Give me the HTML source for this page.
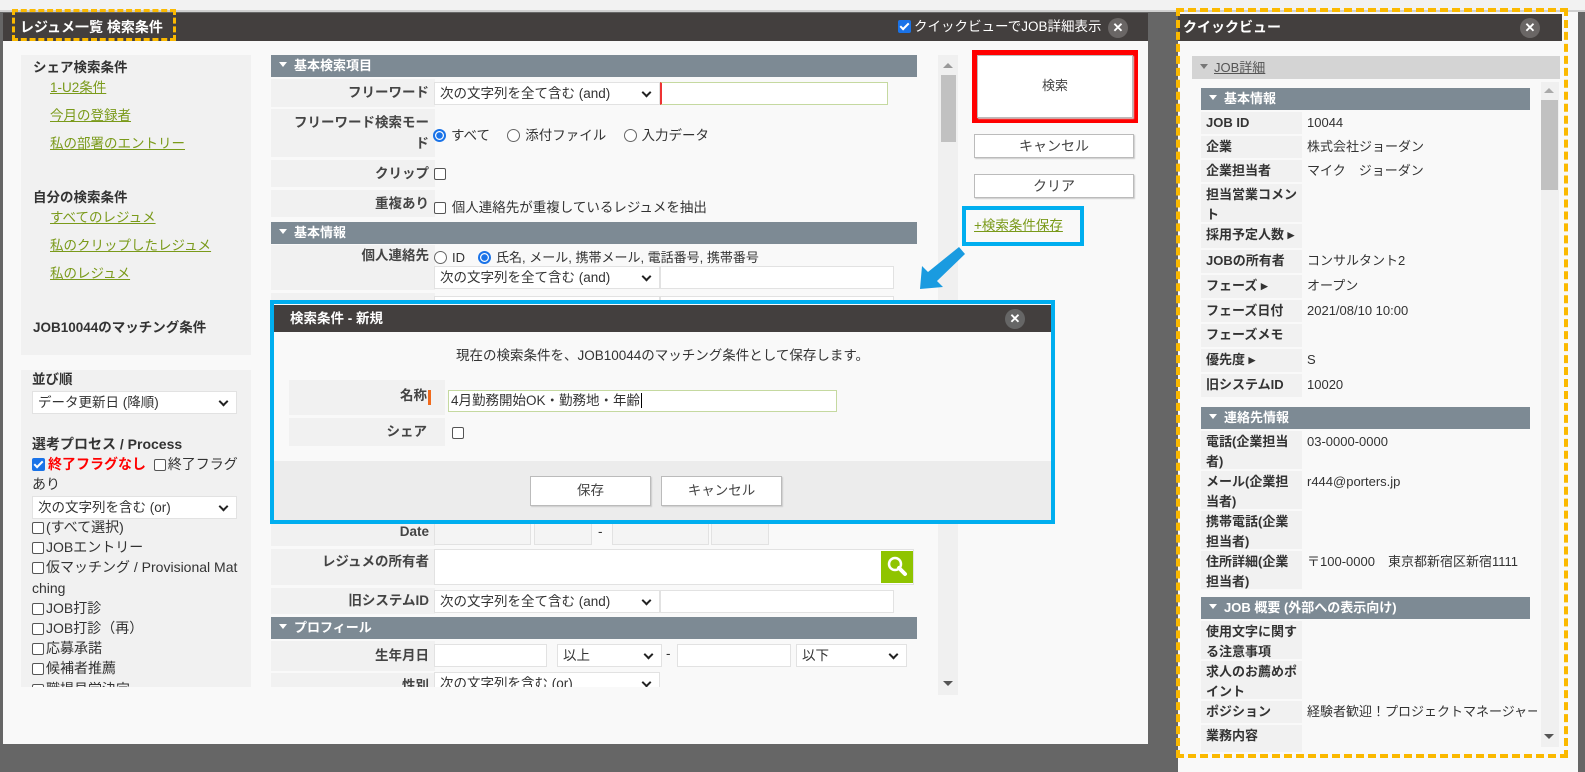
<!DOCTYPE html>
<html><head><meta charset="utf-8">
<style>
*{box-sizing:border-box;margin:0;padding:0}
body{width:1585px;height:772px;overflow:hidden;position:relative;background:#666;font-family:"Liberation Sans","Noto Sans CJK JP",sans-serif;font-size:13px;color:#333}
.a{position:absolute}
.hdr{background:#433f3e;color:#fff;font-weight:bold}
.cls{position:absolute;width:20px;height:20px;border-radius:50%;background:#6a6665;color:#fff;font-size:13px;line-height:20px;text-align:center;font-weight:bold}
.sec{position:absolute;background:#7d8a94;color:#fff;font-weight:bold;font-size:13px;line-height:22px;padding-left:8px}
.sec:before{content:"";display:inline-block;border:4px solid transparent;border-top:5px solid #fff;margin-right:7px;vertical-align:-1px}
.lab{position:absolute;background:#f1f1f1;text-align:right;padding-right:6px;font-weight:bold;color:#444}
.inp{position:absolute;background:#fff;border:1px solid #e2e2e2}
.sel{position:absolute;background:#fff;border:1px solid #e2e2e2;padding-left:5px;line-height:21px;color:#333}
.sel:after{content:"";position:absolute;right:9px;top:6px;width:5px;height:5px;border-right:2px solid #222;border-bottom:2px solid #222;transform:rotate(45deg)}
.cb{display:inline-block;width:12px;height:12px;border:1px solid #555;border-radius:2px;vertical-align:-2px;margin-right:2px;background:#fff}
.cbk{display:inline-block;width:13px;height:13px;border-radius:2px;background:#1a73e8;vertical-align:-2px;margin-right:3px;position:relative}
.cbk:after{content:"";position:absolute;left:4px;top:1px;width:3px;height:7px;border-right:2px solid #fff;border-bottom:2px solid #fff;transform:rotate(45deg)}
.rd{display:inline-block;width:13px;height:13px;border:1px solid #666;border-radius:50%;vertical-align:-2px;margin-right:5px;background:#fff}
.rdk{display:inline-block;width:13px;height:13px;border:2px solid #1a73e8;border-radius:50%;vertical-align:-2px;margin-right:5px;background:radial-gradient(#1a73e8 3px,#fff 3.5px)}
.lk{color:#7a9a1a;text-decoration:underline}
.btn{position:absolute;background:#fff;border:1px solid #bbb;box-shadow:1px 1px 1px #ccc;text-align:center;color:#444}
.q{position:absolute;left:1201px;width:329px;border-top:2px solid #f9f9f9}
.q .l{position:absolute;left:0;top:0;bottom:0;width:101px;background:#f1f1f1;font-weight:bold;padding:1px 5px;line-height:20px;font-size:13px}
.q .v{position:absolute;left:101px;right:0;top:0;bottom:0;background:#f9f9f9;padding:1px 5px;line-height:20px;font-size:13px;white-space:nowrap}
</style></head><body>
<div class="a" style="left:0;top:0;width:1585px;height:12px;background:#f2f2f2;border-bottom:2px solid #d0d0d0"></div>

<!-- main dialog -->
<div class="a" style="left:3px;top:13px;width:1145px;height:731px;background:#f9f9f9"></div>
<div class="a hdr" style="left:3px;top:13px;width:1145px;height:28px;font-size:14px;line-height:28px;padding-left:17px">レジュメ一覧 検索条件</div>
<div class="a" style="left:12px;top:9px;width:164px;height:32px;border:3px dashed #fbb900"></div>
<div class="a" style="left:898px;top:13px;line-height:28px;color:#fff;font-size:13.5px"><span class="cbk"></span>クイックビューでJOB詳細表示</div>
<div class="cls" style="left:1108px;top:18px">✕</div>

<!-- left panel -->
<div class="a" style="left:21px;top:55px;width:230px;height:300px;background:#f1f1f1;line-height:20px;font-size:13.5px">
 <div class="a" style="left:12px;top:3px;font-weight:bold">シェア検索条件</div>
 <div class="a lk" style="left:29px;top:23px">1-U2条件</div>
 <div class="a lk" style="left:29px;top:51px">今月の登録者</div>
 <div class="a lk" style="left:29px;top:79px">私の部署のエントリー</div>
 <div class="a" style="left:12px;top:133px;font-weight:bold">自分の検索条件</div>
 <div class="a lk" style="left:29px;top:153px">すべてのレジュメ</div>
 <div class="a lk" style="left:29px;top:181px">私のクリップしたレジュメ</div>
 <div class="a lk" style="left:29px;top:209px">私のレジュメ</div>
 <div class="a" style="left:12px;top:263px;font-weight:bold">JOB10044のマッチング条件</div>
</div>
<div class="a" style="left:21px;top:370px;width:230px;height:317px;background:#f1f1f1;overflow:hidden;line-height:20px;font-size:14px">
 <div class="a" style="left:11px;top:0px;font-weight:bold;font-size:13.5px">並び順</div>
 <div class="sel" style="left:11px;top:21px;width:205px;height:23px;font-size:13.5px">データ更新日 (降順)</div>
 <div class="a" style="left:11px;top:64px;font-weight:bold">選考プロセス / Process</div>
 <div class="a" style="left:11px;top:84px;width:206px"><span class="cbk"></span><b style="color:#f00">終了フラグなし</b>&nbsp; <span class="cb"></span>終了フラグあり</div>
 <div class="sel" style="left:11px;top:126px;width:205px;height:23px;font-size:13.5px">次の文字列を含む (or)</div>
 <div class="a" style="left:11px;top:147px;width:207px;line-height:20.2px;word-break:break-all">
 <span class="cb"></span>(すべて選択)<br><span class="cb"></span>JOBエントリー<br><span class="cb"></span>仮マッチング / Provisional Matching<br><span class="cb"></span>JOB打診<br><span class="cb"></span>JOB打診（再）<br><span class="cb"></span>応募承諾<br><span class="cb"></span>候補者推薦<br><span class="cb"></span>職場見学決定</div>
</div>

<!-- form area -->
<div class="a" style="left:268px;top:55px;width:652px;height:632px;overflow:hidden;font-size:13.5px">
 <div style="position:absolute;left:-268px;top:-55px;width:1000px;height:800px">
 <div class="sec" style="left:271px;top:55px;width:646px;height:22px">基本検索項目</div>
 <div class="lab" style="left:271px;top:79px;width:164px;height:28px;line-height:28px">フリーワード</div>
 <div class="sel" style="left:434px;top:82px;width:226px;height:23px">次の文字列を全て含む (and)</div>
 <div class="inp" style="left:660px;top:82px;width:228px;height:23px;border-color:#c5d9a0;border-left:2px solid #e33"></div>
 <div class="lab" style="left:271px;top:109px;width:164px;height:48px;line-height:21px;padding-top:3px">フリーワード検索モー<br>ド</div>
 <div class="a" style="left:433px;top:124px"><span class="rdk"></span>すべて　 <span class="rd"></span>添付ファイル　 <span class="rd"></span>入力データ</div>
 <div class="lab" style="left:271px;top:160px;width:164px;height:27px;line-height:27px">クリップ</div>
 <div class="a" style="left:434px;top:166px"><span class="cb"></span></div>
 <div class="lab" style="left:271px;top:190px;width:164px;height:27px;line-height:27px">重複あり</div>
 <div class="a" style="left:434px;top:196px"><span class="cb"></span> 個人連絡先が重複しているレジュメを抽出</div>
 <div class="sec" style="left:271px;top:222px;width:646px;height:22px">基本情報</div>
 <div class="lab" style="left:271px;top:245px;width:164px;height:45px;line-height:22px">個人連絡先</div>
 <div class="a" style="left:434px;top:247px;font-size:13px"><span class="rd"></span>ID　<span class="rdk"></span>氏名, メール, 携帯メール, 電話番号, 携帯番号</div>
 <div class="sel" style="left:434px;top:266px;width:226px;height:23px">次の文字列を全て含む (and)</div>
 <div class="inp" style="left:660px;top:266px;width:234px;height:23px"></div>
 <div class="lab" style="left:271px;top:293px;width:164px;height:40px"></div>
 <div class="inp" style="left:434px;top:296px;width:226px;height:23px"></div>
 <div class="inp" style="left:660px;top:296px;width:234px;height:23px"></div>
 <div class="lab" style="left:271px;top:520px;width:164px;height:26px;line-height:24px">Date</div>
 <div class="inp" style="left:434px;top:522px;width:97px;height:23px;background:#f4f4f4"></div>
 <div class="inp" style="left:534px;top:522px;width:58px;height:23px;background:#f4f4f4"></div>
 <div class="a" style="left:598px;top:524px">-</div>
 <div class="inp" style="left:612px;top:522px;width:97px;height:23px;background:#f4f4f4"></div>
 <div class="inp" style="left:711px;top:522px;width:58px;height:23px;background:#f4f4f4"></div>
 <div class="lab" style="left:271px;top:549px;width:164px;height:36px;line-height:26px">レジュメの所有者</div>
 <div class="inp" style="left:434px;top:549px;width:480px;height:36px"></div>
 <div class="a" style="left:881px;top:551px;width:32px;height:32px;background:#8fc400">
  <svg width="32" height="32" viewBox="0 0 32 32"><circle cx="14" cy="13" r="6" fill="none" stroke="#fff" stroke-width="2.5"/><path d="M18 17l6 6" stroke="#fff" stroke-width="4" stroke-linecap="round"/></svg></div>
 <div class="lab" style="left:271px;top:588px;width:164px;height:26px;line-height:26px">旧システムID</div>
 <div class="sel" style="left:434px;top:590px;width:226px;height:23px">次の文字列を全て含む (and)</div>
 <div class="inp" style="left:660px;top:590px;width:234px;height:23px"></div>
 <div class="sec" style="left:271px;top:617px;width:646px;height:22px">プロフィール</div>
 <div class="lab" style="left:271px;top:641px;width:164px;height:30px;line-height:30px">生年月日</div>
 <div class="inp" style="left:434px;top:644px;width:113px;height:23px"></div>
 <div class="sel" style="left:557px;top:644px;width:105px;height:23px">以上</div>
 <div class="a" style="left:666px;top:646px">-</div>
 <div class="inp" style="left:677px;top:644px;width:114px;height:23px"></div>
 <div class="sel" style="left:796px;top:644px;width:111px;height:23px">以下</div>
 <div class="lab" style="left:271px;top:673px;width:164px;height:30px;line-height:26px">性別</div>
 <div class="sel" style="left:434px;top:672px;width:226px;height:23px">次の文字列を含む (or)</div>
 </div>
</div>
<!-- scrollbar -->
<div class="a" style="left:938px;top:55px;width:20px;height:640px;background:#f0f0f0"></div>
<div class="a" style="left:941px;top:75px;width:15px;height:67px;background:#c1c1c1"></div>
<div class="a" style="left:943px;top:63px;border:5px solid transparent;border-bottom:5px solid #999;border-top:0"></div>
<div class="a" style="left:943px;top:681px;border:5px solid transparent;border-top:5px solid #555;border-bottom:0"></div>

<!-- buttons -->
<div class="a" style="left:972px;top:50px;width:166px;height:73px;border:5px solid #f00"></div>
<div class="btn" style="left:977px;top:55px;width:156px;height:63px;line-height:60px">検索</div>
<div class="btn" style="left:974px;top:134px;width:160px;height:24px;line-height:22px;font-size:14px">キャンセル</div>
<div class="btn" style="left:974px;top:174px;width:160px;height:24px;line-height:22px;font-size:14px">クリア</div>
<div class="a" style="left:962px;top:206px;width:122px;height:40px;border:4px solid #00aeef"></div>
<div class="a lk" style="left:974px;top:214px;font-size:13.5px">+検索条件保存</div>
<svg class="a" style="left:915px;top:243px" width="50" height="50" viewBox="0 0 50 50"><path d="M44 4 L50 11 L22 38 L28 44 L5 46 L7 23 L13 29 Z" fill="#1a9be0"/></svg>

<!-- modal -->
<div class="a" style="left:270px;top:300px;width:785px;height:224px;border:4px solid #00aeef;background:#f9f9f9">
 <div class="a hdr" style="left:0;top:1px;width:777px;height:27px;line-height:27px;padding-left:16px;font-size:13.5px">検索条件 - 新規</div>
 <div class="cls" style="left:731px;top:5px;background:#666">✕</div>
 <div class="a" style="left:0;top:40px;width:777px;text-align:center;font-size:13.5px">現在の検索条件を、JOB10044のマッチング条件として保存します。</div>
 <div class="lab" style="left:15px;top:76px;width:156px;height:35px;line-height:32px;padding-right:18px;font-size:13.5px">名称</div>
 <div class="a" style="left:154px;top:86px;width:3px;height:15px;background:#f06a1c"></div>
 <div class="inp" style="left:174px;top:86px;width:389px;height:22px;border-color:#c5d9a0;line-height:20px;padding-left:2px;font-size:13.5px">4月勤務開始OK・勤務地・年齢<span style="border-left:1px solid #000;margin-left:1px"></span></div>
 <div class="lab" style="left:15px;top:114px;width:156px;height:28px;line-height:28px;padding-right:18px;font-size:13.5px">シェア</div>
 <div class="a" style="left:178px;top:121px"><span class="cb"></span></div>
 <div class="a" style="left:0;top:157px;width:777px;height:59px;background:#ececec"></div>
 <div class="btn" style="left:256px;top:172px;width:121px;height:30px;line-height:28px;font-size:13.5px">保存</div>
 <div class="btn" style="left:387px;top:172px;width:121px;height:30px;line-height:28px;font-size:13.5px">キャンセル</div>
</div>

<!-- quickview -->
<div class="a" style="left:1178px;top:12px;width:400px;height:760px;background:#f9f9f9"></div>
<div class="a hdr" style="left:1178px;top:14px;width:384px;height:27px;line-height:27px;padding-left:5px;font-size:14px">クイックビュー</div>
<div class="cls" style="left:1520px;top:18px">✕</div>
<div class="a" style="left:1192px;top:56px;width:368px;height:23px;background:#d4d4d4;line-height:23px;padding-left:8px;color:#555"><span style="display:inline-block;border:4px solid transparent;border-top:5px solid #777;vertical-align:-1px;margin-right:6px"></span><u>JOB詳細</u></div>
<div class="a" style="left:1541px;top:82px;width:18px;height:665px;background:#f0f0f0"></div>
<div class="a" style="left:1541px;top:100px;width:17px;height:90px;background:#c1c1c1"></div>
<div class="a" style="left:1544px;top:88px;border:5px solid transparent;border-bottom:5px solid #aaa;border-top:0"></div>
<div class="a" style="left:1544px;top:734px;border:5px solid transparent;border-top:5px solid #555;border-bottom:0"></div>
<div class="a" style="left:1192px;top:82px;width:345px;height:670px;overflow:hidden">
<div style="position:absolute;left:-1192px;top:-82px;width:1600px;height:800px">
 <div class="sec" style="left:1201px;top:88px;width:329px;height:22px">基本情報</div>
 <div class="q" style="top:110px;height:24px"><div class="l">JOB ID</div><div class="v">10044</div></div>
 <div class="q" style="top:134px;height:24px"><div class="l">企業</div><div class="v">株式会社ジョーダン</div></div>
 <div class="q" style="top:158px;height:24px"><div class="l">企業担当者</div><div class="v">マイク　ジョーダン</div></div>
 <div class="q" style="top:182px;height:40px"><div class="l">担当営業コメント</div><div class="v"></div></div>
 <div class="q" style="top:222px;height:26px"><div class="l">採用予定人数 ▸</div><div class="v"></div></div>
 <div class="q" style="top:248px;height:25px"><div class="l">JOBの所有者</div><div class="v">コンサルタント2</div></div>
 <div class="q" style="top:273px;height:25px"><div class="l">フェーズ ▸</div><div class="v">オープン</div></div>
 <div class="q" style="top:298px;height:24px"><div class="l">フェーズ日付</div><div class="v">2021/08/10 10:00</div></div>
 <div class="q" style="top:322px;height:25px"><div class="l">フェーズメモ</div><div class="v"></div></div>
 <div class="q" style="top:347px;height:25px"><div class="l">優先度 ▸</div><div class="v">S</div></div>
 <div class="q" style="top:372px;height:25px"><div class="l">旧システムID</div><div class="v">10020</div></div>
 <div class="sec" style="left:1201px;top:407px;width:329px;height:22px">連絡先情報</div>
 <div class="q" style="top:429px;height:40px"><div class="l">電話(企業担当者)</div><div class="v">03-0000-0000</div></div>
 <div class="q" style="top:469px;height:40px"><div class="l">メール(企業担当者)</div><div class="v">r444@porters.jp</div></div>
 <div class="q" style="top:509px;height:40px"><div class="l">携帯電話(企業担当者)</div><div class="v"></div></div>
 <div class="q" style="top:549px;height:40px"><div class="l">住所詳細(企業担当者)</div><div class="v">〒100-0000　東京都新宿区新宿1111</div></div>
 <div class="sec" style="left:1201px;top:597px;width:329px;height:22px">JOB 概要 (外部への表示向け)</div>
 <div class="q" style="top:619px;height:40px"><div class="l">使用文字に関する注意事項</div><div class="v"></div></div>
 <div class="q" style="top:659px;height:40px"><div class="l">求人のお薦めポイント</div><div class="v"></div></div>
 <div class="q" style="top:699px;height:24px"><div class="l">ポジション</div><div class="v">経験者歓迎！プロジェクトマネージャー</div></div>
 <div class="q" style="top:723px;height:30px"><div class="l">業務内容</div><div class="v"></div></div>
</div></div>
<div class="a" style="left:1176px;top:8px;width:392px;height:750px;border:4px dashed #fbb900"></div>
</body></html>
